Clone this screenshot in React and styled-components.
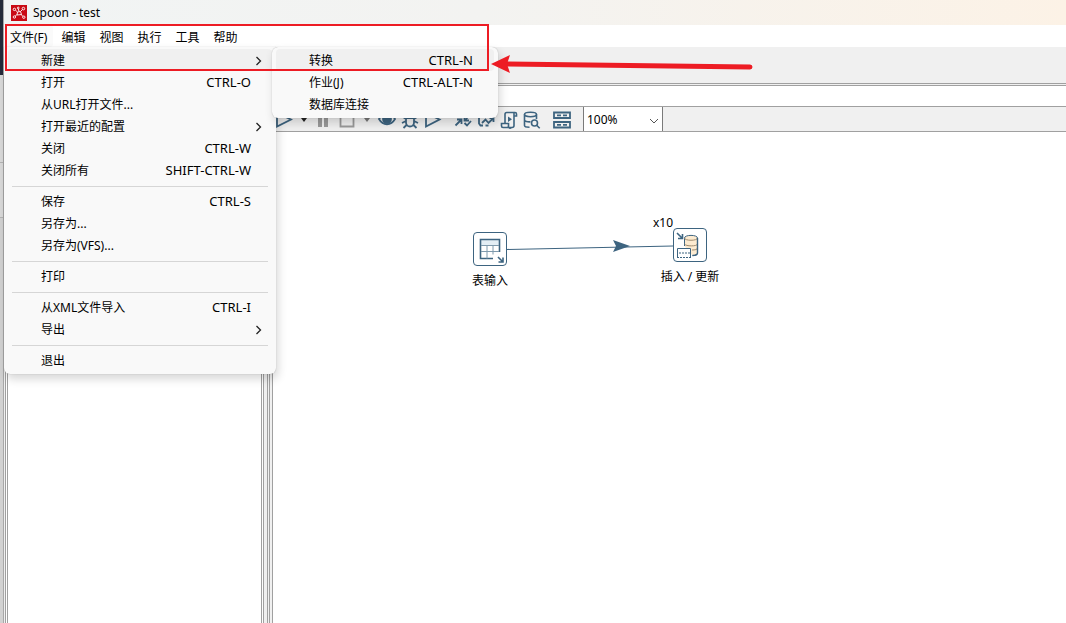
import React from 'react'
import styled, { createGlobalStyle, css } from 'styled-components'

const vars = {
  face: '#f0f0f0',
  line: '#a0a0a0',
  menu: '#f9f9f9',
  steel: '#3d6480',
  disabled: '#9a9a9a',
  red: '#ed1c24'
}

const fileMenu = [
  [
    {
      label: '新建',
      active: true,
      children: [
        { label: '转换', keys: 'CTRL-N', active: true },
        { label: '作业(J)', keys: 'CTRL-ALT-N' },
        { label: '数据库连接' }
      ]
    },
    { label: '打开', keys: 'CTRL-O' },
    { label: '从URL打开文件...' },
    { label: '打开最近的配置', more: true },
    { label: '关闭', keys: 'CTRL-W' },
    { label: '关闭所有', keys: 'SHIFT-CTRL-W' }
  ],
  [
    { label: '保存', keys: 'CTRL-S' },
    { label: '另存为...' },
    { label: '另存为(VFS)...' }
  ],
  [{ label: '打印' }],
  [
    { label: '从XML文件导入', keys: 'CTRL-I' },
    { label: '导出', more: true }
  ],
  [{ label: '退出' }]
]

const Icon = ({ children, color = vars.steel }) => (
  <svg width="18" height="18" viewBox="0 0 18 18" fill="none" stroke={color} strokeWidth="1.8" aria-hidden="true">
    {children}
  </svg>
)

const Caret = ({ color = '#222' }) => (
  <svg width="6" height="4" viewBox="0 0 6 4" aria-hidden="true"><path d="M0 0h6L3 4z" fill={color} /></svg>
)

const Logo = () => (
  <svg width="16" height="16" viewBox="0 0 16 16" aria-hidden="true">
    <rect width="16" height="16" fill="#c90a14" />
    <g fill="none" stroke="#fff" strokeWidth="0.9">
      <circle cx="3.4" cy="4.4" r="1.2" />
      <circle cx="7.2" cy="3" r="0.9" />
      <circle cx="12.4" cy="3.6" r="1.3" />
      <circle cx="3.4" cy="12" r="1.2" />
      <circle cx="12.8" cy="12.2" r="1.2" />
      <path d="M4.400 5.200L6.500 7M7.400 4L8 6.500M11.500 4.500L9.500 6.500M4.200 11l2-1.500M11.900 11.300L10 9.500M6.500 7l3-.5L10.500 9.500l-4.500.5z" />
    </g>
  </svg>
)

const MenuItem = ({ label, keys, more, active, children }) => (
  <Item>
    <ItemButton type="button" $active={active}>
      <span>{label}</span>
      <Keys>{keys}</Keys>
      <Arrow>
        {(more || children) && (
          <svg width="7" height="10" viewBox="0 0 7 10" aria-hidden="true">
            <path d="M1.500 1l4 4-4 4" fill="none" stroke="#222" strokeWidth="1.300" />
          </svg>
        )}
      </Arrow>
    </ItemButton>
    {children && (
      <SubMenu>
        {children.map(child => <MenuItem key={child.label} {...child} />)}
      </SubMenu>
    )}
  </Item>
)

const TransToolbar = () => (
  <EditorBar>
    <ToolGroup>
      <Tool aria-label="运行"><Icon><path d="M2 2v13.500L16 8.500z" /></Icon></Tool>
      <Tool $narrow aria-label="运行选项"><Caret /></Tool>
      <Tool aria-label="暂停"><Icon color={vars.disabled}><path d="M5 2v14M11 2v14" strokeWidth="4" /></Icon></Tool>
      <Tool aria-label="停止"><Icon color={vars.disabled}><path d="M2.500 2.500h13v13h-13z" /></Icon></Tool>
      <Tool $narrow aria-label="停止选项"><Caret color="#777" /></Tool>
      <Tool aria-label="预览">
        <Icon>
          <path d="M1 8c4-6.500 12-6.500 16 0-4 7-12 7-16 0z" />
          <circle cx="9" cy="8" r="4" fill={vars.steel} />
        </Icon>
      </Tool>
      <Tool aria-label="调试">
        <Icon><path d="M5 7h8v4.500a4 4 0 0 1-8 0zM6 6a3 3 0 0 1 6 0M5 8L2 6M13 8l3-2M5 10L1 12M13 10l4 2M6 13.500L2.500 17M12 13.500l3.500 3.500" /></Icon>
      </Tool>
      <Tool aria-label="重放"><Icon><path d="M2 2v13.500L15.500 8.500z" /></Icon></Tool>
    </ToolGroup>
    <ToolGroup>
      <Tool aria-label="校验">
        <Icon><path d="M1.500 14.500L7.500 8.500M3 8.500h4.500V13M16 3l-4.500 6M10.500 5v4.500H15M10.500 12l2.500 2.500 4-4.500" /></Icon>
      </Tool>
      <Tool aria-label="影响">
        <Icon><path d="M6 14.500H3.500L2 12.500V3h13v3M5 12l3.500-3.500 3 3.500 5-5M12.500 7h4v4M8.500 14.500h3" /></Icon>
      </Tool>
      <Tool aria-label="SQL">
        <Icon>
          <path d="M5 12V3.200A1.700 1.700 0 0 1 6.700 1.500H15A1.500 1.500 0 0 1 16.500 3v2H13.500M14 2v12.500a2 2 0 0 1-2 2H3A1.500 1.500 0 0 1 1.500 15v-2.500h7V15a1.500 1.500 0 0 0 3 1" strokeWidth="1.600" />
          <path d="M8 5.500v5.500l4-2.700z" fill={vars.steel} stroke="none" />
        </Icon>
      </Tool>
      <Tool aria-label="探索数据库">
        <Icon>
          <g strokeWidth="1.600">
            <ellipse cx="7.500" cy="3.500" rx="6" ry="2.200" />
            <path d="M1.500 3.500v11c0 1.200 2.500 1.700 5 1.700M13.500 3.500V8M1.500 9c0 1.300 3 2 6 1.800" />
            <circle cx="11.500" cy="12" r="3" />
            <path d="M13.700 14.200l3 3" />
          </g>
        </Icon>
      </Tool>
    </ToolGroup>
    <ToolGroup>
      <Tool aria-label="显示结果">
        <Icon>
          <path d="M1 1.500h16v5.500H1zM1 11h16v5.500H1z" />
          <path d="M4 4.300h4M10 4.300h4M4 13.800h4M10 13.800h4" />
        </Icon>
      </Tool>
    </ToolGroup>
    <Zoom>
      <select aria-label="缩放" defaultValue="100%">
        <option>200%</option>
        <option>100%</option>
        <option>50%</option>
      </select>
      <svg width="10" height="6" viewBox="0 0 10 6" aria-hidden="true">
        <path d="M1 1l4 4 4-4" fill="none" stroke="#555" />
      </svg>
    </Zoom>
  </EditorBar>
)

const App = () => {
  return (
    <>
      <GlobalStyle />
      <Desktop>
        <Behind />
        <Window>
          <TitleBar>
            <Logo />
            <h1>Spoon - test</h1>
          </TitleBar>

          <MenuBar>
            <MenuButton type="button" $open>文件(F)</MenuButton>
            {['编辑', '视图', '执行', '工具', '帮助'].map(name => (
              <MenuButton key={name} type="button">{name}</MenuButton>
            ))}
            <FileMenu>
              {fileMenu.map((group, i) => (
                <MenuGroup key={i}>
                  {group.map(item => <MenuItem key={item.label} {...item} />)}
                </MenuGroup>
              ))}
            </FileMenu>
          </MenuBar>

          <MainBar />

          <Body>
            <Sidebar />
            <Editor>
              <Tabs />
              <TransToolbar />
              <Canvas>
                <Hop width="166" height="14" viewBox="0 0 166 14" aria-hidden="true">
                  <path d="M0 10.500L166 7" stroke={vars.steel} strokeWidth="1.200" />
                  <path d="M106 1l17 6-17 6 3-6z" fill={vars.steel} />
                </Hop>
                <Step $x={200} $y={100}>
                  <svg width="28" height="28" viewBox="0 0 28 28" fill="none" stroke={vars.steel} aria-hidden="true">
                    <path d="M5 5h18v5H5z" fill="#e3eef5" stroke="none" />
                    <path d="M23.500 17V4.500h-19v19H17" strokeWidth="1.600" />
                    <path d="M5 10.500h18M5 16.500h18M11 10.500v13M17 10.500v9" stroke="#7f9aad" />
                    <path d="M22 22l5 5M27 22.500V27h-4.500" strokeWidth="1.600" />
                  </svg>
                </Step>
                <StepName $x={217} $y={140}>表输入</StepName>
                <Copies>x10</Copies>
                <Step $x={400} $y={96}>
                  <svg width="28" height="28" viewBox="0 0 28 28" fill="none" stroke={vars.steel} aria-hidden="true">
                    <path d="M8.500 15V7c0-3.500 13-3.500 13 0v15c0 1.500-2 2.500-5 2.500" fill="#fdebd0" />
                    <path d="M8.500 7c0 3 13 3 13 0M8.500 13c1 2.500 13 2.500 13 0M16 19c3 0 5.500-.5 5.500-2" stroke="#a08c70" />
                    <path d="M21.500 7v15c0 1.500-2 2.500-5 2.500" strokeWidth="1.400" />
                    <path d="M1 17h14v10H1z" fill="#fff" stroke="none" />
                    <path d="M1.500 26V17.500h13V26" />
                    <path d="M3 22h11M1 26.500h14" strokeDasharray="2 1" strokeWidth="1.200" />
                    <path d="M1 2l5 5M6.500 3v4.500H2" strokeWidth="1.600" />
                  </svg>
                </Step>
                <StepName $x={417} $y={136}>插入 / 更新</StepName>
              </Canvas>
            </Editor>
          </Body>
        </Window>

        <Highlight />
        <Pointer width="262" height="20" viewBox="0 0 262 20" aria-hidden="true">
          <path d="M14 9L259 12" stroke={vars.red} strokeWidth="5" strokeLinecap="round" />
          <path d="M0 9L19 0l-3 9 3 9z" fill={vars.red} />
        </Pointer>
      </Desktop>
    </>
  )
}

const GlobalStyle = createGlobalStyle`
* {
  box-sizing: border-box;
}

body {
  margin: 0;
  overflow: hidden;
  background: #fff;
}

body, button, select {
  font-family: 'Noto Sans', 'Noto Sans CJK SC', sans-serif;
  font-size: 12px;
  color: #000;
}

button {
  border: none;
  background: none;
  padding: 0;
}
`

const Desktop = styled.div`
display: flex;
min-height: 100vh;
position: relative;
`

const Behind = styled.div`
flex: 0 0 4px;
border-right: 1px solid #a8a8a8;
background: linear-gradient(#252b3a 0 75px, #dadada 75px 162px, #b4b4b4 162px 163px, #dadada 163px 217px, #b4b4b4 217px 218px, #d2d2d2 218px);
`

const Window = styled.div`
flex: 1;
min-width: 0;
display: flex;
flex-direction: column;
background: ${vars.face};
`

const TitleBar = styled.header`
display: flex;
align-items: center;
gap: 6px;
height: 25px;
padding-left: 7px;
background: linear-gradient(90deg, #f1f4f4 0%, #f3f3f1 45%, #fcf2e6 100%);

h1 {
  margin: 0;
  font-size: 12px;
  font-weight: 400;
}
`

const MenuBar = styled.nav`
display: flex;
gap: 2px;
height: 22px;
background: #fff;
position: relative;
z-index: 2;
`

const MenuButton = styled.button`
padding: 3px 6px 0;
line-height: 19px;
border-radius: 3px;
background: ${({ $open }) => $open ? '#fafafa' : 'none'};
`

const panel = css`
position: absolute;
margin: 0;
padding: 2px 0 3px;
list-style: none;
background: ${vars.menu};
border-radius: 0 0 6px 6px;
box-shadow: 0 0 1px rgba(0, 0, 0, 0.3), 2px 5px 10px rgba(0, 0, 0, 0.16);
`

const FileMenu = styled.div`
${panel}
top: 100%;
left: 0;
width: 272px;
`

const MenuGroup = styled.ul`
margin: 0;
padding: 0;
list-style: none;

& + &::before {
  content: '';
  display: block;
  height: 1px;
  margin: 5px 8px 3px;
  background: #d6d6d6;
}
`

const SubMenu = styled.ul`
${panel}
top: -2px;
left: 100%;
width: 226px;
border-radius: 6px;
`

const Item = styled.li`
position: relative;
margin: 0 4px;
`

const ItemButton = styled.button`
display: grid;
grid-template-columns: 1fr auto 21px;
align-items: center;
width: 100%;
height: 22px;
padding-left: 33px;
text-align: left;
border-radius: 4px;
background: ${({ $active }) => $active ? '#f0f0f0' : 'none'};
`

const Keys = styled.span`
font-size: 13px;
line-height: 18px;
`

const Arrow = styled.span`
display: flex;
padding: 2px 0 0 4px;
`

const MainBar = styled.div`
height: 36px;
`

const Body = styled.div`
flex: 1;
display: flex;
gap: 3px;
padding-left: 1px;
border-top: 3px double ${vars.line};
`

const Sidebar = styled.aside`
flex: 0 0 259px;
background: #fff;
border: double ${vars.line};
border-width: 0 3px;
`

const Editor = styled.main`
flex: 1;
min-width: 0;
display: flex;
flex-direction: column;
padding-left: 2px;
border-left: 3px double ${vars.line};
`

const Tabs = styled.div`
height: 21px;
background: #fff;
border-bottom: 1px solid ${vars.line};
`

const EditorBar = styled.div`
display: flex;
align-items: center;
gap: 12px;
height: 25px;
padding-left: 2px;
border-left: 1px solid ${vars.line};
border-bottom: 1px solid ${vars.line};
`

const ToolGroup = styled.div`
display: flex;
gap: 5px;
padding-top: 2px;
`

const Tool = styled.button`
display: flex;
align-items: center;
justify-content: center;
width: ${({ $narrow }) => $narrow ? '12px' : '18px'};
height: 18px;
`

const Zoom = styled.div`
align-self: stretch;
position: relative;

select {
  width: 80px;
  height: 100%;
  padding: 0 3px;
  appearance: none;
  background: #fff;
  border: solid #7a7a7a;
  border-width: 0 1px;
  border-radius: 0;
}

svg {
  position: absolute;
  right: 4px;
  top: 11px;
  pointer-events: none;
}
`

const Canvas = styled.section`
flex: 1;
position: relative;
background: #fff;
border-left: 1px solid ${vars.line};
`

const Step = styled.div`
position: absolute;
left: ${({ $x }) => $x}px;
top: ${({ $y }) => $y}px;
display: flex;
align-items: center;
justify-content: center;
width: 34px;
height: 34px;
background: #fff;
border: 1px solid ${vars.steel};
border-radius: 4px;
`

const StepName = styled.span`
position: absolute;
left: ${({ $x }) => $x}px;
top: ${({ $y }) => $y}px;
line-height: 18px;
white-space: nowrap;
transform: translateX(-50%);
`

const Copies = styled.span`
position: absolute;
left: 380px;
top: 82px;
line-height: 18px;
`

const Hop = styled.svg`
position: absolute;
left: 234px;
top: 107px;
`

const Highlight = styled.div`
position: absolute;
z-index: 3;
left: 5px;
top: 24px;
width: 484px;
height: 47px;
border: 2px solid ${vars.red};
pointer-events: none;
`

const Pointer = styled.svg`
position: absolute;
z-index: 3;
left: 491px;
top: 55px;
pointer-events: none;
`

export default App
